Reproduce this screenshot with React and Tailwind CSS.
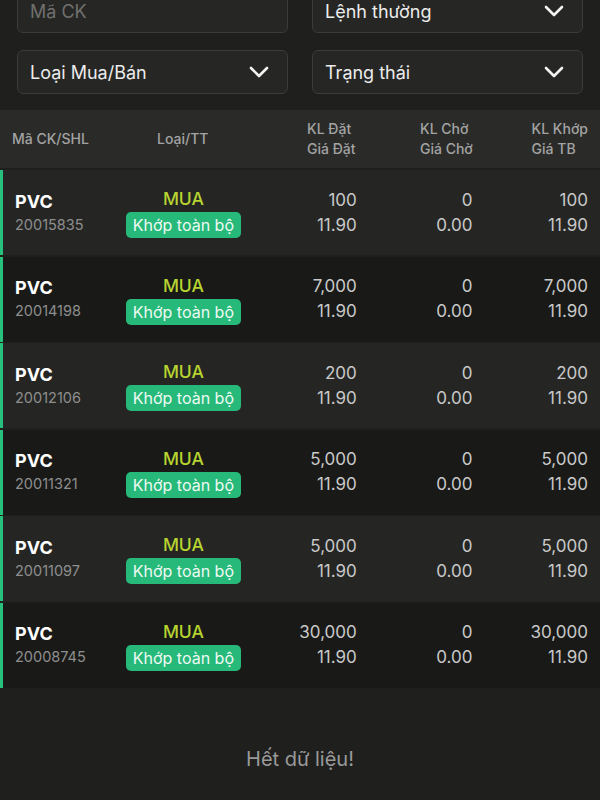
import React from "react";

const rows = [
  { id: "20015835", dat: "100", cho: "0", khop: "100" },
  { id: "20014198", dat: "7,000", cho: "0", khop: "7,000" },
  { id: "20012106", dat: "200", cho: "0", khop: "200" },
  { id: "20011321", dat: "5,000", cho: "0", khop: "5,000" },
  { id: "20011097", dat: "5,000", cho: "0", khop: "5,000" },
  { id: "20008745", dat: "30,000", cho: "0", khop: "30,000" },
];

const Chevron = () => (
  <svg width="20" height="12" viewBox="0 0 20 12" fill="none">
    <path d="M2 2l8 8 8-8" stroke="#f2f2f2" strokeWidth="2.6" strokeLinecap="round" strokeLinejoin="round" />
  </svg>
);

const Select = ({ label }) => (
  <div className="flex h-[44px] items-center justify-between rounded-[6px] border border-[#3b3c3a] bg-[#262725] pl-3 pr-[18px]">
    <span className="text-[18px] text-[#ececec]">{label}</span>
    <Chevron />
  </div>
);

const App = () => {
  return (
    <div className="h-[800px] overflow-hidden bg-[#1f201e]" style={{ fontFamily: "Inter, 'Noto Sans', sans-serif" }}>
      <div className="-mt-[11px] grid grid-cols-2 gap-x-6 gap-y-[17px] px-[17px]">
        <div className="flex h-[44px] items-center rounded-[6px] border border-[#3b3c3a] bg-[#262725] px-3">
          <span className="text-[18px] text-[#6f706e]">Mã CK</span>
        </div>
        <Select label="Lệnh thường" />
        <Select label="Loại Mua/Bán" />
        <Select label="Trạng thái" />
      </div>

      <div className="mt-4 grid h-[58px] grid-cols-5 items-center bg-[#2a2b29] pl-3 pr-3 text-[14px] font-medium leading-[20px] text-[#a3a3a3]">
        <div>Mã CK/SHL</div>
        <div className="pr-[4px] text-center">Loại/TT</div>
        <div className="flex justify-end pr-[2px]"><div>KL Đặt<br />Giá Đặt</div></div>
        <div className="flex justify-end"><div>KL Chờ<br />Giá Chờ</div></div>
        <div className="flex justify-end"><div>KL Khớp<br />Giá TB</div></div>
      </div>

      <div className="mt-[2px] flex flex-col gap-[1.5px]">
        {rows.map((r, i) => (
          <div
            key={r.id}
            className={`grid h-[85px] grid-cols-5 items-center border-l-[3px] border-[#27c07d] pl-3 pr-3 ${i % 2 === 0 ? "bg-[#252624]" : "bg-[#191a18]"}`}
          >
            <div>
              <div className="text-[18px] font-bold leading-[24px] text-white">PVC</div>
              <div className="text-[14.5px] leading-[22px] text-[#8e8e8e]">{r.id}</div>
            </div>
            <div className="flex flex-col items-center pr-[7px]">
              <div className="text-[17.5px] font-medium leading-[24px] text-[#b8d430]">MUA</div>
              <div className="mt-[1px] whitespace-nowrap rounded-[5px] bg-[#26b97a] px-[7px] text-[16px] leading-[26px] text-[#eefaf3]">Khớp toàn bộ</div>
            </div>
            <div className="pr-[2px] text-right text-[17px] leading-[25px] text-[#c9c9c9]">
              <div>{r.dat}</div>
              <div>11.90</div>
            </div>
            <div className="pr-[1px] text-right text-[17px] leading-[25px] text-[#c9c9c9]">
              <div>{r.cho}</div>
              <div>0.00</div>
            </div>
            <div className="text-right text-[17px] leading-[25px] text-[#c9c9c9]">
              <div>{r.khop}</div>
              <div>11.90</div>
            </div>
          </div>
        ))}
      </div>

      <div className="mt-[56px] text-center text-[20px] text-[#9a9a9a]">Hết dữ liệu!</div>
    </div>
  );
};

export default App;
